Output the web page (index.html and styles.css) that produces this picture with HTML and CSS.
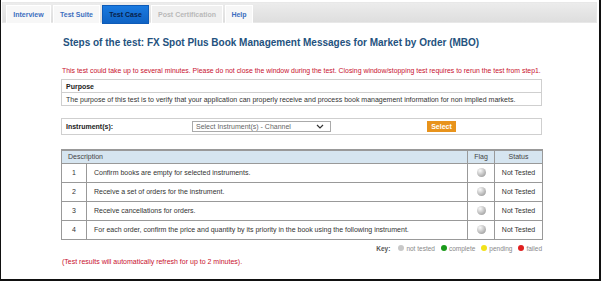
FILE: index.html
```html
<!DOCTYPE html>
<html>
<head>
<meta charset="utf-8">
<link rel="stylesheet" href="styles.css">
</head>
<body>
<div class="frame">
  <div class="tabbar">
    <div class="tab">Interview</div>
    <div class="tab">Test Suite</div>
    <div class="tab active">Test Case</div>
    <div class="tab disabled">Post Certification</div>
    <div class="tab">Help</div>
  </div>
  <div class="content">
    <h1 class="title">Steps of the test: FX Spot Plus Book Management Messages for Market by Order (MBO)</h1>
    <p class="warn">This test could take up to several minutes. Please do not close the window during the test. Closing window/stopping test requires to rerun the test from step1.</p>
    <div class="purpose">
      <div class="purpose-head">Purpose</div>
      <div class="purpose-body">The purpose of this test is to verify that your application can properly receive and process book management information for non implied markets.</div>
    </div>
    <div class="instr">
      <div class="instr-label">Instrument(s):</div>
      <div class="select">
        <span>Select Instrument(s) - Channel</span>
        <svg width="8" height="5" viewBox="0 0 8 5"><path d="M1 1 L4 4 L7 1" fill="none" stroke="#333" stroke-width="1.2"/></svg>
      </div>
      <div class="btn">Select</div>
    </div>
    <table class="steps">
      <colgroup>
        <col class="w-num"><col class="w-text"><col class="w-flag"><col class="w-status">
      </colgroup>
      <thead>
        <tr><th class="c-desc" colspan="2">Description</th><th>Flag</th><th>Status</th></tr>
      </thead>
      <tbody>
        <tr><td class="c-num">1</td><td class="c-text">Confirm books are empty for selected instruments.</td><td class="c-flag"><span class="ball"></span></td><td class="c-status">Not Tested</td></tr>
        <tr><td class="c-num">2</td><td class="c-text">Receive a set of orders for the instrument.</td><td class="c-flag"><span class="ball"></span></td><td class="c-status">Not Tested</td></tr>
        <tr><td class="c-num">3</td><td class="c-text">Receive cancellations for orders.</td><td class="c-flag"><span class="ball"></span></td><td class="c-status">Not Tested</td></tr>
        <tr><td class="c-num">4</td><td class="c-text">For each order, confirm the price and quantity by its priority in the book using the following instrument.</td><td class="c-flag"><span class="ball"></span></td><td class="c-status">Not Tested</td></tr>
      </tbody>
    </table>
    <div class="key">
      <b>Key:</b>
      <span class="kdot grey"></span><span>not tested</span>
      <span class="kdot green"></span><span>complete</span>
      <span class="kdot yellow"></span><span>pending</span>
      <span class="kdot red"></span><span>failed</span>
    </div>
    <p class="refresh">(Test results will automatically refresh for up to 2 minutes).</p>
  </div>
</div>
</body>
</html>
```
FILE: styles.css
```css
* { box-sizing: border-box; }
html, body { margin: 0; padding: 0; background: #fff; }
body { font-family: "Liberation Sans", Arial, sans-serif; width: 602px; height: 282px; overflow: hidden; }
.frame {
  width: 601px;
  height: 281px;
  border-left: 1px solid #111;
  border-right: 2px solid #111;
  border-bottom: 2px solid #111;
  padding: 2px 1px 0 1px;
}
.tabbar {
  display: flex;
  gap: 2px;
  height: 21px;
  padding: 2px 0 0 3px;
  background: linear-gradient(#ececec, #dedede);
  border: 1px solid #e8e8e8;
  margin-right: 1px;
}
.tab {
  height: 19px;
  padding: 0 6px;
  display: flex;
  align-items: center;
  justify-content: center;
  font-size: 7px;
  font-weight: bold;
  color: #3d6fc0;
  background: #f7f7f7;
  border: 1px solid #fff;
}
.tab:nth-child(1) { width: 45px; }
.tab:nth-child(2) { width: 47px; }
.tab:nth-child(3) { width: 47px; }
.tab:nth-child(4) { width: 72px; }
.tab:nth-child(5) { width: 28px; }
.tab.active { background: linear-gradient(#1a7ae0, #0f63c4); color: #08214a; border-color: #0d5bb8; }
.tab.disabled { color: #b9b9b9; background: #f0f0f0; }
.content { padding: 0 0 0 59px; width: 540px; }
.title {
  margin: 13px 0 0 2px;
  font-size: 10px;
  font-weight: bold;
  color: #24527e;
  line-height: 14px;
  white-space: nowrap;
}
.warn {
  margin: 16px 0 0 1px;
  font-size: 6.9px;
  color: #c8102e;
  line-height: 9px;
  white-space: nowrap;
}
.purpose {
  margin-top: 4px;
  border: 1px solid #cfcfcf;
  font-size: 7px;
  line-height: 11px;
}
.purpose-head { font-weight: bold; color: #222; padding: 0 4px; border-bottom: 1px solid #cfcfcf; height: 13px; display: flex; align-items: center; }
.purpose-body { color: #333; padding: 0 4px; height: 12px; display: flex; align-items: center; white-space: nowrap; }
.instr {
  margin-top: 12px;
  height: 17px;
  border: 1px solid #cfcfcf;
  display: flex;
  align-items: center;
  font-size: 7px;
}
.instr-label { font-weight: bold; color: #222; padding-left: 4px; width: 130px; }
.select {
  width: 139px;
  height: 11px;
  border: 1px solid #aaa;
  display: flex;
  align-items: center;
  justify-content: space-between;
  padding: 0 6px 0 3px;
  color: #666;
}
.btn {
  margin-left: 96px;
  background: #e8931c;
  color: #fff;
  font-weight: bold;
  height: 11px;
  width: 29px;
  display: flex;
  align-items: center;
  justify-content: center;
}
.steps {
  margin-top: 14px;
  width: 481px;
  border-collapse: collapse;
  font-size: 7px;
  color: #333;
  table-layout: fixed;
}
.w-num { width: 25px; }
.w-text { width: 381px; }
.w-flag { width: 27px; }
.w-status { width: 48px; }
.steps th, .steps td { border: 1px solid #999; }
.steps thead th {
  background: #d6e5f0;
  font-weight: normal;
  color: #444;
  height: 13px;
  border-top: 2px solid #999;
  padding: 0;
  text-align: center;
}
.steps th.c-desc { text-align: left; padding-left: 6px; }
.steps td { height: 19px; padding: 0; }
.c-num { text-align: center; }
.steps td.c-text { padding-left: 7px; white-space: nowrap; overflow: hidden; }
.c-flag { text-align: center; }
.c-status { text-align: center; }
.ball {
  display: inline-block;
  width: 9px;
  height: 9px;
  border-radius: 50%;
  background: radial-gradient(circle at 35% 30%, #fafafa 0, #c8c8c8 45%, #8c8c8c 100%);
  vertical-align: middle;
}
.key {
  width: 481px;
  display: flex;
  justify-content: flex-end;
  align-items: center;
  gap: 2px;
  margin-top: 4px;
  font-size: 6.5px;
  color: #888;
  height: 9px;
}
.key b { color: #555; margin-right: 2px; }
.kdot { width: 6px; height: 6px; border-radius: 50%; display: inline-block; margin-left: 4px; }
.kdot.grey { background: #c8c8c8; }
.kdot.green { background: #1a9a1a; }
.kdot.yellow { background: #f2e21a; }
.kdot.red { background: #e02020; }
.refresh {
  margin: 5px 0 0 1px;
  font-size: 7px;
  color: #c8102e;
}
```
